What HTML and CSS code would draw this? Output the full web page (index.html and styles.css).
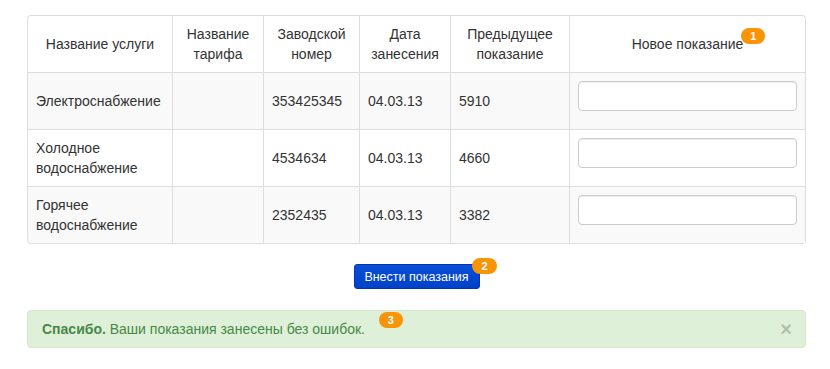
FILE: index.html
```html
<!DOCTYPE html>
<html lang="ru">

<head>
    <meta charset="UTF-8" />
    <title>Показания счётчиков</title>
    <link rel="stylesheet" href="styles.css">
</head>

<body>
    <div class="page">
        <table class="meters">
            <thead>
                <tr>
                    <th class="c-service">Название услуги</th>
                    <th class="c-tariff">Название тарифа</th>
                    <th class="c-serial">Заводской номер</th>
                    <th class="c-date">Дата занесения</th>
                    <th class="c-prev">Предыдущее показание</th>
                    <th class="c-new"><span class="hint">Новое показание<span class="badge badge-head">1</span></span></th>
                </tr>
            </thead>
            <tbody>
                <tr>
                    <td>Электроснабжение</td>
                    <td></td>
                    <td>353425345</td>
                    <td>04.03.13</td>
                    <td>5910</td>
                    <td><input type="text" class="reading"></td>
                </tr>
                <tr>
                    <td>Холодное водоснабжение</td>
                    <td></td>
                    <td>4534634</td>
                    <td>04.03.13</td>
                    <td>4660</td>
                    <td><input type="text" class="reading"></td>
                </tr>
                <tr>
                    <td>Горячее водоснабжение</td>
                    <td></td>
                    <td>2352435</td>
                    <td>04.03.13</td>
                    <td>3382</td>
                    <td><input type="text" class="reading"></td>
                </tr>
            </tbody>
        </table>

        <div class="actions">
            <span class="hint">
                <button class="btn-submit">Внести показания</button>
                <span class="badge badge-btn">2</span>
            </span>
        </div>

        <div class="alert">
            <p><span class="hint"><strong>Спасибо.</strong> Ваши показания занесены без ошибок.<span class="badge badge-alert">3</span></span></p>
            <span class="close">&times;</span>
        </div>
    </div>
</body>

</html>
```

FILE: styles.css
```css
* {
    margin: 0;
    padding: 0;
    box-sizing: border-box;
}

body {
    font-family: 'Liberation Sans', Arial, sans-serif;
    font-size: 14px;
    line-height: 20px;
    color: #333;
    background: #fff;
}

.page {
    width: 779px;
    margin: 15px 0 0 27px;
}

/* таблица показаний */
.meters {
    width: 779px;
    table-layout: fixed;
    border: 1px solid #ddd;
    border-left: 0;
    border-collapse: separate;
    border-spacing: 0;
    border-radius: 4px;
    margin-bottom: 20px;
}

.meters th,
.meters td {
    padding: 8px;
    border-left: 1px solid #ddd;
    border-top: 1px solid #ddd;
    vertical-align: middle;
    text-align: left;
}

.meters th {
    font-weight: normal;
    text-align: center;
    border-top: 0;
}

.meters thead th:first-child {
    border-top-left-radius: 4px;
}

.meters tbody tr:last-child td:first-child {
    border-bottom-left-radius: 4px;
}

.meters tbody tr:nth-child(odd) td {
    background: #f9f9f9;
}

.c-service { width: 145px; }
.c-tariff { width: 91px; }
.c-serial { width: 96px; }
.c-date { width: 91px; }
.c-prev { width: 119px; }
.c-new { width: 236px; }

.reading {
    display: block;
    width: 100%;
    height: 30px;
    margin-bottom: 10px;
    padding: 4px 6px;
    border: 1px solid #ccc;
    border-radius: 4px;
    background: #fff;
    box-shadow: inset 0 1px 1px rgba(0, 0, 0, 0.075);
    font: inherit;
}

/* подсказки-номера */
.hint {
    position: relative;
    display: inline-block;
}

.badge {
    position: absolute;
    padding: 1px 9px;
    font-size: 11px;
    font-weight: bold;
    line-height: 14px;
    color: #fff;
    background: #f89406;
    border-radius: 9px;
    white-space: nowrap;
}

.badge-head {
    top: -6px;
    right: -22px;
}

.badge-btn {
    top: -6px;
    right: -17px;
}

.badge-alert {
    top: -7px;
    right: -38px;
}

.actions {
    text-align: center;
    margin-bottom: 21px;
}

.btn-submit {
    display: block;
    width: 126px;
    height: 25px;
    border: 1px solid #0039ad;
    border-radius: 3px;
    background: linear-gradient(to bottom, #0a4fd6, #0041c8);
    color: #fff;
    font-family: inherit;
    font-size: 12.5px;
    line-height: 20px;
    cursor: pointer;
}

/* сообщение об успехе */
.alert {
    display: flex;
    justify-content: space-between;
    align-items: center;
    padding: 8px 13px 8px 14px;
    border: 1px solid #d6e9c6;
    border-radius: 4px;
    background: #dff0d8;
    color: #468847;
}

.close {
    font-size: 20px;
    font-weight: bold;
    line-height: 20px;
    color: #000;
    opacity: 0.2;
}
```
